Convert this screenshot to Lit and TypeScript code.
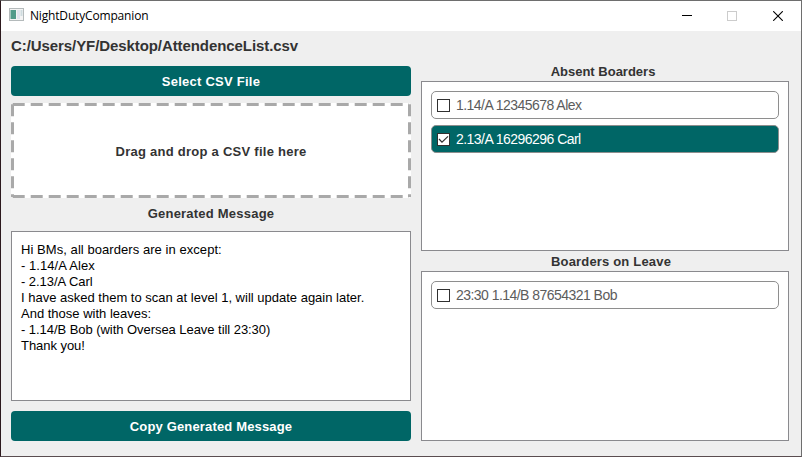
import { LitElement, html, css, svg } from "lit";
import { customElement, property } from "lit/decorators.js";

@customElement("boarder-item")
class BoarderItem extends LitElement {
  @property() label = "";
  @property({ type: Boolean, reflect: true }) checked = false;

  static styles = css`
    :host {
      box-sizing: border-box;
      display: flex;
      align-items: center;
      gap: 6px;
      height: 28px;
      padding: 0 5px;
      border: 1px solid #8e8e8e;
      border-radius: 5px;
      background: #fff;
      color: #5c5c5c;
    }
    :host([checked]) {
      background: #006666;
      color: #fff;
    }
    .box {
      flex: none;
      display: block;
    }
    .text {
      white-space: pre;
      font-size: 14px;
      line-height: 16px;
      letter-spacing: -0.54px;
    }
  `;

  render() {
    return html`
      <svg class="box" width="13" height="13" viewBox="0 0 13 13">
        <rect x="0.5" y="0.5" width="12" height="12" fill="#fff" stroke="#303030" />
        ${this.checked
          ? svg`<path d="M2 6 L5 9.2 L11 3.4" fill="none" stroke="#303030" stroke-width="1.2" />`
          : null}
      </svg>
      <span class="text">${this.label}</span>
    `;
  }
}

@customElement("app-root")
class AppRoot extends LitElement {
  private message = [
    { text: "Hi BMs, all boarders are in except:", spacing: "wide" },
    { text: "- 1.14/A Alex", spacing: "wide" },
    { text: "- 2.13/A Carl", spacing: "tight" },
    { text: "I have asked them to scan at level 1, will update again later.", spacing: "normal" },
    { text: "And those with leaves:", spacing: "normal" },
    { text: "- 1.14/B Bob (with Oversea Leave till 23:30)", spacing: "tight" },
    { text: "Thank you!", spacing: "tight" },
  ];

  static styles = css`
    :host {
      box-sizing: border-box;
      display: flex;
      flex-direction: column;
      width: 802px;
      height: 457px;
      overflow: hidden;
      border: 1px solid #6e6e6e;
      border-left-color: #2c191d;
      border-bottom-color: #5a4d50;
      background: #efefef;
      color: #333;
      font-family: "Liberation Sans", Arial, sans-serif;
    }
    .titlebar {
      flex: none;
      display: flex;
      align-items: center;
      height: 30px;
      padding-left: 8px;
      background: #fff;
      color: #000;
    }
    .app-icon {
      margin-bottom: 3px;
    }
    .title {
      flex: 1;
      margin-left: 6px;
      font-family: "Open Sans", "Noto Sans", sans-serif;
      font-size: 12px;
      line-height: 16px;
      letter-spacing: -0.17px;
    }
    .control {
      width: 46px;
      display: flex;
      justify-content: center;
    }
    svg {
      display: block;
    }
    .body {
      flex: 1;
      display: grid;
      grid-template-columns: 400px 368px;
      column-gap: 10px;
      padding-left: 10px;
    }
    .column {
      display: flex;
      flex-direction: column;
    }
    .path {
      height: 35px;
      line-height: 30px;
      font-size: 15px;
      font-weight: bold;
      letter-spacing: -0.08px;
    }
    .button {
      flex: none;
      height: 30px;
      border-radius: 4px;
      background: #006666;
      color: #fff;
      font-size: 13px;
      font-weight: bold;
      line-height: 31px;
      letter-spacing: 0.25px;
      text-align: center;
    }
    .button.copy {
      letter-spacing: 0.16px;
    }
    .drop {
      position: relative;
      height: 95px;
      margin-top: 7px;
      background: #fff;
      border-radius: 3px;
      line-height: 97px;
      letter-spacing: 0.26px;
    }
    .drop,
    .heading {
      font-size: 13px;
      font-weight: bold;
      text-align: center;
    }
    .outline {
      position: absolute;
      inset: 0;
    }
    .heading {
      height: 33px;
      line-height: 31px;
      letter-spacing: 0.22px;
    }
    .panel {
      box-sizing: border-box;
      height: 170px;
      border: 1px solid #8a8a8e;
      background: #fff;
    }
    .message {
      margin-bottom: 10px;
      padding: 10px 9px;
      color: #000;
      font-size: 13px;
      line-height: 16px;
      white-space: pre;
    }
    .wide {
      letter-spacing: 0.06px;
    }
    .tight {
      letter-spacing: -0.05px;
    }
    .right {
      padding-top: 30px;
    }
    .right .heading {
      height: 20px;
      line-height: 21px;
    }
    .heading.absent {
      padding-right: 4px;
      letter-spacing: 0;
    }
    .heading.leave {
      padding-left: 12px;
      letter-spacing: 0.18px;
    }
    .list {
      display: flex;
      flex-direction: column;
      gap: 6px;
      padding: 9px;
    }
  `;

  render() {
    return html`
      <div class="titlebar">
        <svg class="app-icon" width="15" height="13" viewBox="0 0 15 13">
          <rect x="0.5" y="0.5" width="14" height="12" fill="#f4f4f4" stroke="#b4babb" />
          <rect x="1.5" y="2" width="5.5" height="9" fill="#529b8b" />
          <rect x="8" y="2" width="3" height="9" fill="#e2e5ee" />
          <rect x="11.5" y="2" width="2" height="6" fill="#cfdcdf" />
        </svg>
        <span class="title">NightDutyCompanion</span>
        <span class="control">
          <svg width="11" height="10"><path d="M1 4.5H11" stroke="#000" /></svg>
        </span>
        <span class="control">
          <svg width="10" height="10">
            <rect x="0.5" y="0.5" width="9" height="9" fill="none" stroke="#ccc" />
          </svg>
        </span>
        <span class="control">
          <svg width="10" height="10">
            <path d="M0.2 0.2L9.8 9.8M9.8 0.2L0.2 9.8" stroke="#000" stroke-width="1.1" />
          </svg>
        </span>
      </div>
      <div class="body">
        <div class="column">
          <div class="path">C:/Users/YF/Desktop/AttendenceList.csv</div>
          <div class="button">Select CSV File</div>
          <div class="drop">
            <svg class="outline" width="400" height="95" fill="none" stroke="#a9a9a9" stroke-width="3">
              <path d="M1.7 1.5H398" stroke-dasharray="12 6" />
              <path d="M1.7 93.5H398" stroke-dasharray="12 6" />
              <path d="M1.5 1.3V94" stroke-dasharray="12 6" />
              <path d="M398.5 1.3V94" stroke-dasharray="12 6" />
            </svg>
            Drag and drop a CSV file here
          </div>
          <div class="heading">Generated Message</div>
          <div class="panel message">${this.message.map(
            (line) => html`<div class=${line.spacing}>${line.text}</div>`
          )}</div>
          <div class="button copy">Copy Generated Message</div>
        </div>
        <div class="column right">
          <div class="heading absent">Absent Boarders</div>
          <div class="panel list">
            <boarder-item label="1.14/A 12345678 Alex"></boarder-item>
            <boarder-item label="2.13/A 16296296 Carl" checked></boarder-item>
          </div>
          <div class="heading leave">Boarders on Leave</div>
          <div class="panel list">
            <boarder-item label="23:30 1.14/B 87654321 Bob"></boarder-item>
          </div>
        </div>
      </div>
    `;
  }
}
